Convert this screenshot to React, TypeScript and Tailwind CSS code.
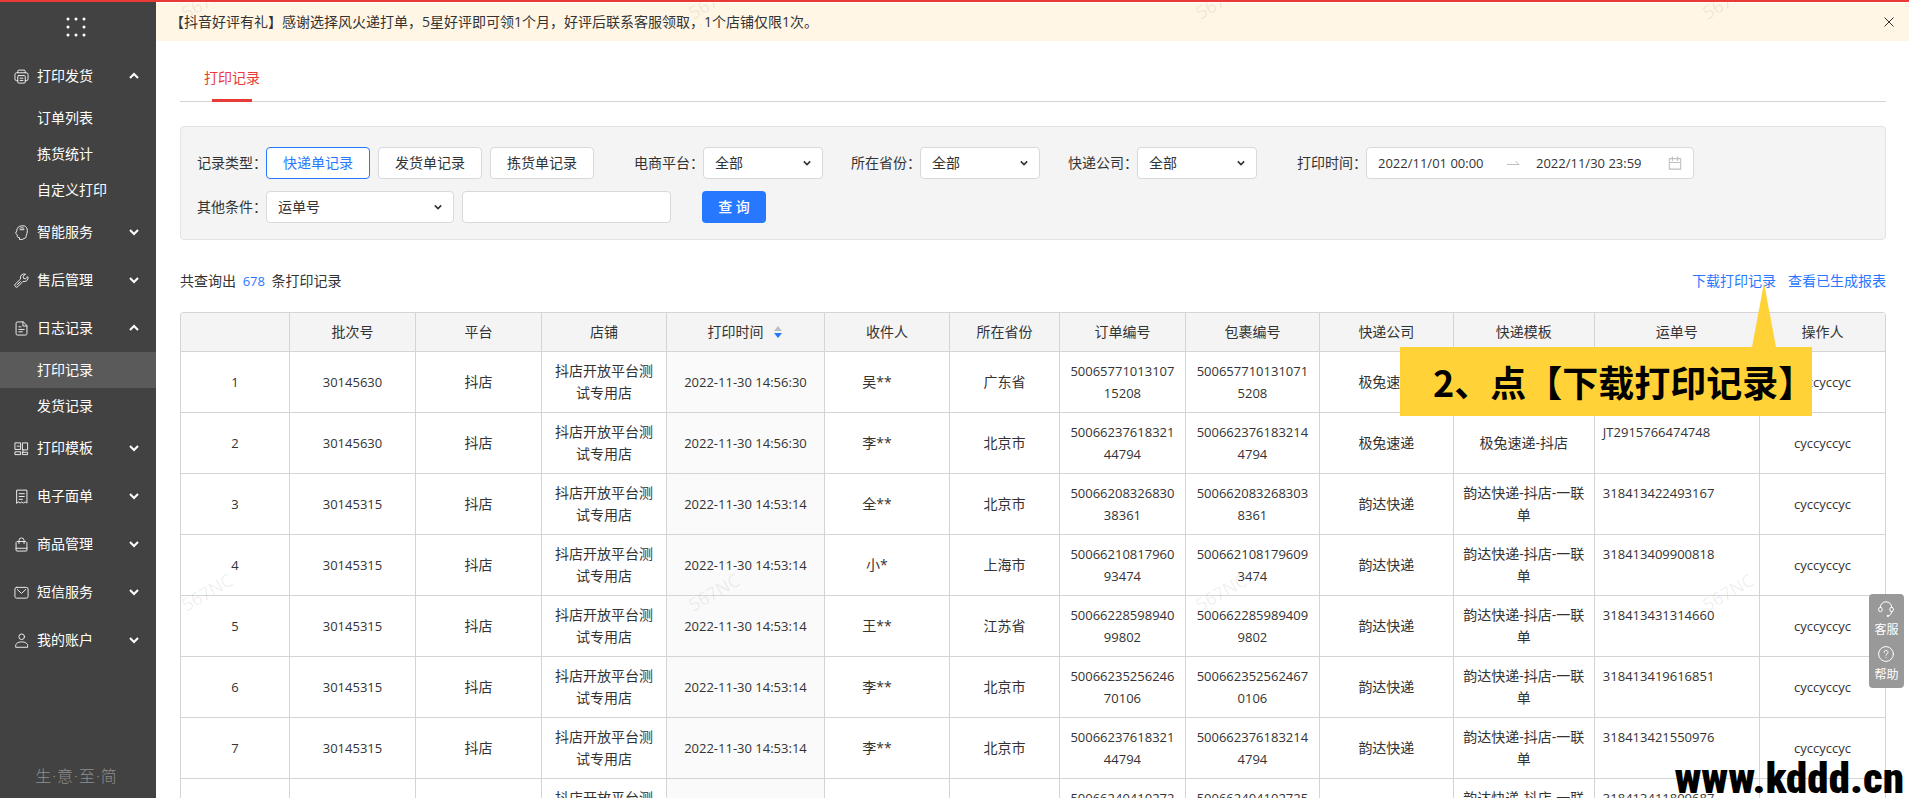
import { useState } from "react"

const SANS = "font-['Open_Sans','Noto_Sans_CJK_SC',sans-serif]"

type IconProps = { className?: string }

const stroke = {
  viewBox: "0 0 16 16",
  fill: "none",
  stroke: "currentColor",
  strokeWidth: 1,
  strokeLinecap: "round" as const,
  strokeLinejoin: "round" as const,
}

const PrinterIcon = ({ className }: IconProps) => (
  <svg {...stroke} className={className}>
    <path d="M4 4V2.500a1.300 1.300 0 0 1 1.300-1.300h5.400A1.300 1.300 0 0 1 12 2.500V4" />
    <path d="M4 12.500H3a2 2 0 0 1-2-2V6a2 2 0 0 1 2-2h10a2 2 0 0 1 2 2v4.500a2 2 0 0 1-2 2h-1" />
    <path d="M5 7h6a1 1 0 0 1 1 1v6a1 1 0 0 1-1 1H5a1 1 0 0 1-1-1V8a1 1 0 0 1 1-1zM6.500 9.800h3M6.500 12.200h3" />
  </svg>
)

const BrainIcon = ({ className }: IconProps) => (
  <svg {...stroke} className={className}>
    <path d="M6 15.300v-1.800l-1.800-.3-.6-.8-.1-1.900-1.800-1.700 1.200-2.600C3 3 5.300.900 8.500.900h2.300c2.100.5 3.400 2.400 3.400 5.300 0 2-.5 3.300-.9 4.600-.4 1-.6 1.800-.7 2.700L9 15.300z" />
    <path d="M6.300 3.600c.9-1 3.400-1 4.300 0M6.500 5h4" />
  </svg>
)

const WrenchIcon = ({ className }: IconProps) => (
  <svg {...stroke} className={className}>
    <path d="M12 1.200a4 4 0 0 0-5 5.200L1.400 11.700a1.900 1.900 0 0 0 2.800 2.800l5.400-5.600a4 4 0 0 0 5.200-5L12.200 6.200l-2-.5-.4-1.900z" />
    <path d="M3.200 12.800l3.600-3.600" />
  </svg>
)

const DocIcon = ({ className }: IconProps) => (
  <svg {...stroke} className={className}>
    <path d="M9.500 1H3.700a1.500 1.500 0 0 0-1.500 1.500v11A1.500 1.500 0 0 0 3.700 15h8.600a1.500 1.500 0 0 0 1.500-1.500V5.300z" />
    <path d="M9.500 1v4.300h4.300M5.200 6.200h2.300M5.200 9h5.600M5.200 11.500h3.800" />
  </svg>
)

const TemplateIcon = ({ className }: IconProps) => (
  <svg {...stroke} strokeLinecap="square" strokeLinejoin="miter" className={className}>
    <path d="M1.500 2h5.500v7H1.500zM9.500 2h5v7.500h-5zM1.500 11.500h5.500V14.500H1.500zM9.500 12h5v2.500h-5zM3.500 5.500h2M9.500 9.500v2.500" />
  </svg>
)

const ReceiptIcon = ({ className }: IconProps) => (
  <svg {...stroke} className={className}>
    <path d="M2.800 15V1.200h11V15l-1.800-1.200L10.200 15l-1.900-1.200L6.500 15l-1.900-1.200zM5.500 5h5.500M5.500 8h5.500M5.500 11h3.500" />
  </svg>
)

const BagIcon = ({ className }: IconProps) => (
  <svg {...stroke} className={className}>
    <path d="M3.500 4.800h9l1.300 1.300v7.900a1 1 0 0 1-1 1H3.200a1 1 0 0 1-1-1V6.100zM5.300 7V3.700a2.700 2.700 0 0 1 5.400 0V7M2.200 12h11.600" />
  </svg>
)

const MailIcon = ({ className }: IconProps) => (
  <svg {...stroke} className={className}>
    <rect x="1" y="2.500" width="14" height="11.500" rx="1.800" />
    <path d="M3.500 4.800L8 9l4.500-4.200" />
  </svg>
)

const UserIcon = ({ className }: IconProps) => (
  <svg {...stroke} className={className}>
    <circle cx="8.200" cy="4" r="3" />
    <path d="M1.800 14.800v-1.300c0-2.200 2.400-4 6.400-4s6.400 1.800 6.400 4v1.300z" />
  </svg>
)

const Chevron = ({ up, className }: { up?: boolean; className?: string }) => (
  <svg viewBox="0 0 10 8" fill="none" stroke="currentColor" strokeWidth="2" className={className}>
    <path d={up ? "M1 6l4-4 4 4" : "M1 2l4 4 4-4"} />
  </svg>
)

const CalendarIcon = ({ className }: IconProps) => (
  <svg {...stroke} strokeWidth={1.2} className={className}>
    <path d="M1.500 3h13v12h-13zM1.500 7.500h13M5 1v4M11 1v4" />
  </svg>
)

const HeadsetIcon = ({ className }: IconProps) => (
  <svg {...stroke} className={className}>
    <path d="M2.300 6.300C2.500 2.800 5 .800 8 .800s5.500 2 5.700 5.500M13.700 10.500c0 2.300-1.200 3.700-3.200 4.300" />
    <rect x=".700" y="6.300" width="3.400" height="4.400" rx="1.600" />
    <rect x="11.900" y="6.300" width="3.400" height="4.400" rx="1.600" />
    <circle cx="9.800" cy="14.900" r=".700" fill="currentColor" />
  </svg>
)

const HelpIcon = ({ className }: IconProps) => (
  <svg {...stroke} className={className}>
    <circle cx="8" cy="8" r="7.400" />
    <path d="M6.200 6.300a1.900 1.900 0 1 1 2.800 1.600c-.7.400-1 .7-1 1.400M8 11.200v.1" />
  </svg>
)

const menu = [
  { label: "打印发货", icon: PrinterIcon, open: true, children: ["订单列表", "拣货统计", "自定义打印"] },
  { label: "智能服务", icon: BrainIcon },
  { label: "售后管理", icon: WrenchIcon },
  { label: "日志记录", icon: DocIcon, open: true, children: ["打印记录", "发货记录"] },
  { label: "打印模板", icon: TemplateIcon },
  { label: "电子面单", icon: ReceiptIcon },
  { label: "商品管理", icon: BagIcon },
  { label: "短信服务", icon: MailIcon },
  { label: "我的账户", icon: UserIcon },
]

const columns = [
  { title: "", width: 109 },
  { title: "批次号", width: 126 },
  { title: "平台", width: 126 },
  { title: "店铺", width: 125 },
  { title: "打印时间", width: 158, sort: true },
  { title: "收件人", width: 125 },
  { title: "所在省份", width: 110 },
  { title: "订单编号", width: 126 },
  { title: "包裹编号", width: 134 },
  { title: "快递公司", width: 134 },
  { title: "快递模板", width: 141 },
  { title: "运单号", width: 165 },
  { title: "操作人", width: 126 },
]
const totalWidth = columns.reduce((sum, c) => sum + c.width, 0)

const YD = "韵达快递-抖店-一联单"

const rows = [
  { batch: "30145630", time: "2022-11-30 14:56:30", name: "吴**", province: "广东省", order: "5006577101310715208", company: "极兔速递", template: "极兔速递-抖店", waybill: "JT2915766474747" },
  { batch: "30145630", time: "2022-11-30 14:56:30", name: "李**", province: "北京市", order: "5006623761832144794", company: "极兔速递", template: "极兔速递-抖店", waybill: "JT2915766474748" },
  { batch: "30145315", time: "2022-11-30 14:53:14", name: "全**", province: "北京市", order: "5006620832683038361", company: "韵达快递", template: YD, waybill: "318413422493167" },
  { batch: "30145315", time: "2022-11-30 14:53:14", name: "小*", province: "上海市", order: "5006621081796093474", company: "韵达快递", template: YD, waybill: "318413409900818" },
  { batch: "30145315", time: "2022-11-30 14:53:14", name: "王**", province: "江苏省", order: "5006622859894099802", company: "韵达快递", template: YD, waybill: "318413431314660" },
  { batch: "30145315", time: "2022-11-30 14:53:14", name: "李**", province: "北京市", order: "5006623525624670106", company: "韵达快递", template: YD, waybill: "318413419616851" },
  { batch: "30145315", time: "2022-11-30 14:53:14", name: "李**", province: "北京市", order: "5006623761832144794", company: "韵达快递", template: YD, waybill: "318413421550976" },
  { batch: "30145315", time: "2022-11-30 14:53:14", name: "李**", province: "北京市", order: "5006624041027254794", company: "韵达快递", template: YD, waybill: "318413411809687" },
]

function Sidebar() {
  return (
    <aside className="flex w-[156px] shrink-0 flex-col bg-[#424242] text-sm text-white">
      <div className="flex h-[50px] items-center justify-center pr-1">
        <svg viewBox="0 0 20 20" className="h-5 w-5" fill="#fff">
          {[2, 10, 18].map((y) => [2, 10, 18].map((x) => (x === 10 && y === 10 ? null : <circle key={`${x}-${y}`} cx={x} cy={y} r="1.500" />)))}
        </svg>
      </div>
      <nav className="flex-1">
        {menu.map(({ label, icon: Icon, open, children }) => (
          <div key={label}>
            <button type="button" aria-expanded={!!open} className="flex h-12 w-full items-center pl-3.5 pr-[17px] text-left">
              <Icon className="mr-2 h-[15px] w-[15px] text-gray-100" />
              <span className="flex-1">{label}</span>
              <Chevron up={open} className="h-2 w-2.5" />
            </button>
            {children?.map((child) => (
              <a
                key={child}
                href="#"
                className={`flex h-9 items-center pl-[37px] ${child === "打印记录" ? "bg-[#5a5a5a]" : ""}`}
              >
                {child}
              </a>
            ))}
          </div>
        ))}
      </nav>
      <div className="flex h-11 items-center justify-center gap-px pr-1 text-base font-light text-[#8f8f8f]">
        <span>生</span>
        <span>·</span>
        <span>意</span>
        <span>·</span>
        <span>至</span>
        <span>·</span>
        <span>简</span>
      </div>
    </aside>
  )
}

function SelectField({ id, label, options, className }: { id: string; label: string; options: string[]; className: string }) {
  return (
    <div className="flex items-center">
      <label htmlFor={id} className="w-[69px] whitespace-nowrap">
        {label}：
      </label>
      <div className="relative">
        <select id={id} className={`h-8 appearance-none rounded border border-[#d9d9d9] bg-white pl-[11px] pr-8 ${className}`}>
          {options.map((o) => (
            <option key={o}>{o}</option>
          ))}
        </select>
        <Chevron className="pointer-events-none absolute right-3 top-3 h-2 w-2" />
      </div>
    </div>
  )
}

function Filters() {
  const [type, setType] = useState("快递单记录")

  return (
    <form className="mt-6 flex flex-col gap-3 rounded border border-[#e3e3e3] bg-[#f4f4f4] px-4 pb-4 pt-5" onSubmit={(e) => e.preventDefault()}>
      <div className="flex items-center">
        <span className="w-[69px] whitespace-nowrap">记录类型：</span>
        <div className="mr-10 flex gap-2">
          {["快递单记录", "发货单记录", "拣货单记录"].map((t) => (
            <button
              key={t}
              type="button"
              onClick={() => setType(t)}
              className={`h-8 w-[104px] rounded border bg-white ${t === type ? "border-[#2878ff] text-[#2878ff]" : "border-[#d9d9d9]"}`}
            >
              {t}
            </button>
          ))}
        </div>
        <div className="flex gap-7">
          <SelectField id="platform" label="电商平台" options={["全部"]} className="w-[120px]" />
          <SelectField id="province" label="所在省份" options={["全部"]} className="w-[120px]" />
          <SelectField id="company" label="快递公司" options={["全部"]} className="w-[120px]" />
        </div>
        <label htmlFor="start" className="ml-10 w-[69px] whitespace-nowrap">
          打印时间：
        </label>
        <div className="flex h-8 w-[328px] items-center rounded border border-[#d9d9d9] bg-white px-[11px] text-[13px]">
          <input id="start" defaultValue="2022/11/01 00:00" className="w-32 outline-none" />
          <svg viewBox="0 0 14 8" className="mr-4 h-2 w-3.5" fill="none" stroke="#bfbfbf">
            <path d="M1 5.500h12L9.500 2" />
          </svg>
          <input aria-label="结束时间" defaultValue="2022/11/30 23:59" className="w-[118px] outline-none" />
          <CalendarIcon className="ml-auto h-3.5 w-3.5 text-[#bfbfbf]" />
        </div>
      </div>
      <div className="flex items-center">
        <SelectField id="condition" label="其他条件" options={["运单号"]} className="w-[188px]" />
        <input aria-label="运单号" className="ml-2 h-8 w-[209px] rounded border border-[#d9d9d9] bg-white px-3 outline-none" />
        <button type="submit" className="ml-[31px] h-8 w-16 rounded bg-[#2878ff] font-medium text-white">
          查 询
        </button>
      </div>
    </form>
  )
}

function RecordTable() {
  const cell = "border-b border-r border-[#d4d4d4] px-2 py-2"

  return (
    <table className="w-full table-fixed border-separate border-spacing-0 overflow-hidden rounded border-l border-t border-[#d4d4d4] text-center leading-[22px]">
      <colgroup>
        {columns.map((c, i) => (
          <col key={i} style={{ width: `${(c.width / totalWidth) * 100}%` }} />
        ))}
      </colgroup>
      <thead>
        <tr className="bg-[#f4f4f4]">
          {columns.map((c, i) => (
            <th key={i} className={`${cell} font-normal`}>
              <span className="inline-flex items-center gap-2.5">
                {c.title}
                {c.sort && (
                  <svg viewBox="0 0 10 14" className="h-3.5 w-2.5">
                    <path d="M1 6l4-5 4 5z" fill="#bfbfbf" />
                    <path d="M1 8l4 5 4-5z" fill="#2878ff" />
                  </svg>
                )}
              </span>
            </th>
          ))}
        </tr>
      </thead>
      <tbody>
        {rows.map((r, i) => (
          <tr key={i}>
            <td className={`${cell} text-[13px]`}>{i + 1}</td>
            <td className={`${cell} text-[13px]`}>{r.batch}</td>
            <td className={cell}>抖店</td>
            <td className={cell}>抖店开放平台测试专用店</td>
            <td className={`${cell} bg-[#fafafa] text-[13px]`}>{r.time}</td>
            <td className={`${cell} pr-7`}>{r.name}</td>
            <td className={cell}>{r.province}</td>
            <td className={`${cell} break-all text-[13px]`}>{r.order}</td>
            <td className={`${cell} break-all text-[13px]`}>{r.order}</td>
            <td className={cell}>{r.company}</td>
            <td className={`${cell} break-all`}>{r.template}</td>
            <td className={`${cell} text-left align-top text-[13px]`}>{r.waybill}</td>
            <td className={`${cell} text-[13px]`}>cyccyccyc</td>
          </tr>
        ))}
      </tbody>
    </table>
  )
}

function Watermarks() {
  return (
    <div aria-hidden className="pointer-events-none absolute inset-0 overflow-hidden">
      {[-2, 590].map((y) =>
        [0, 1, 2, 3].map((i) => (
          <span
            key={`${y}-${i}`}
            className="absolute -translate-y-1/2 -rotate-30 text-lg leading-none text-black/8"
            style={{ left: 179 + i * 507, top: y }}
          >
            567NC
          </span>
        )),
      )}
    </div>
  )
}

export default function App() {
  return (
    <div className={`relative flex h-screen flex-col overflow-hidden border-t-2 border-[#e93a36] bg-white text-sm text-[#333] ${SANS}`}>
      <div className="flex min-h-0 flex-1">
        <Sidebar />

        <div className="min-w-0 flex-1 overflow-y-auto [scrollbar-width:none]">
          {/* Notice */}
          <div className="mt-px flex h-[38px] items-center justify-between bg-[#fff6e5] pl-3.5 pr-[15px]">
            <p>【抖音好评有礼】感谢选择风火递打单，5星好评即可领1个月，好评后联系客服领取，1个店铺仅限1次。</p>
            <button type="button" aria-label="关闭">
              <svg viewBox="0 0 10 10" className="h-2.5 w-2.5" stroke="#333" strokeWidth="1">
                <path d="M.5.500l9 9M9.500.500l-9 9" />
              </svg>
            </button>
          </div>

          <main className="pl-6 pr-[23px]">
            {/* Tabs */}
            <div className="flex h-[61px] items-end border-b border-[#d4d4d4] px-6">
              <a href="#" className="flex flex-col items-center text-[#e93a36]">
                <span className="mb-2.5 leading-[22px]">打印记录</span>
                <span className="-mb-px h-[3px] w-10 bg-[#e93a36]" />
              </a>
            </div>

            <Filters />

            <div className="flex h-[72px] items-center justify-between pt-2.5">
              <p>
                共查询出 <span className="px-[3px] text-[13px] text-[#2878ff]">678</span> 条打印记录
              </p>
              <div className="flex gap-3 text-[#2878ff]">
                <a href="#">下载打印记录</a>
                <a href="#">查看已生成报表</a>
              </div>
            </div>

            <RecordTable />
          </main>
        </div>
      </div>

      <Watermarks />

      {/* Callout */}
      <div className="absolute right-[97px] top-[345px] h-[69px] w-[412px] whitespace-nowrap bg-[#ffd237] pl-[33px] text-4xl font-bold leading-[69px] text-black font-['Noto_Sans_CJK_SC',sans-serif]">
        <svg viewBox="0 0 24 64" className="absolute bottom-full right-9 h-16 w-6" fill="#ffd237">
          <path d="M12 0L24 64H0z" />
        </svg>
        2、点【下载打印记录】
      </div>

      {/* Support */}
      <div className="absolute right-[5px] top-[592px] flex h-[94px] w-[35px] flex-col items-center gap-2 rounded bg-[#999] pt-[7px] text-xs text-white">
        <button type="button" className="flex flex-col items-center gap-[5px]">
          <HeadsetIcon className="h-4 w-4" />
          客服
        </button>
        <button type="button" className="flex flex-col items-center gap-[5px]">
          <HelpIcon className="h-4 w-4" />
          帮助
        </button>
      </div>

      <div className="absolute bottom-0 right-[5px] text-[43px] font-black leading-[40px] text-black font-['Roboto_Condensed','Open_Sans_Condensed','Roboto',sans-serif]">
        www.kddd.cn
      </div>
    </div>
  )
}
